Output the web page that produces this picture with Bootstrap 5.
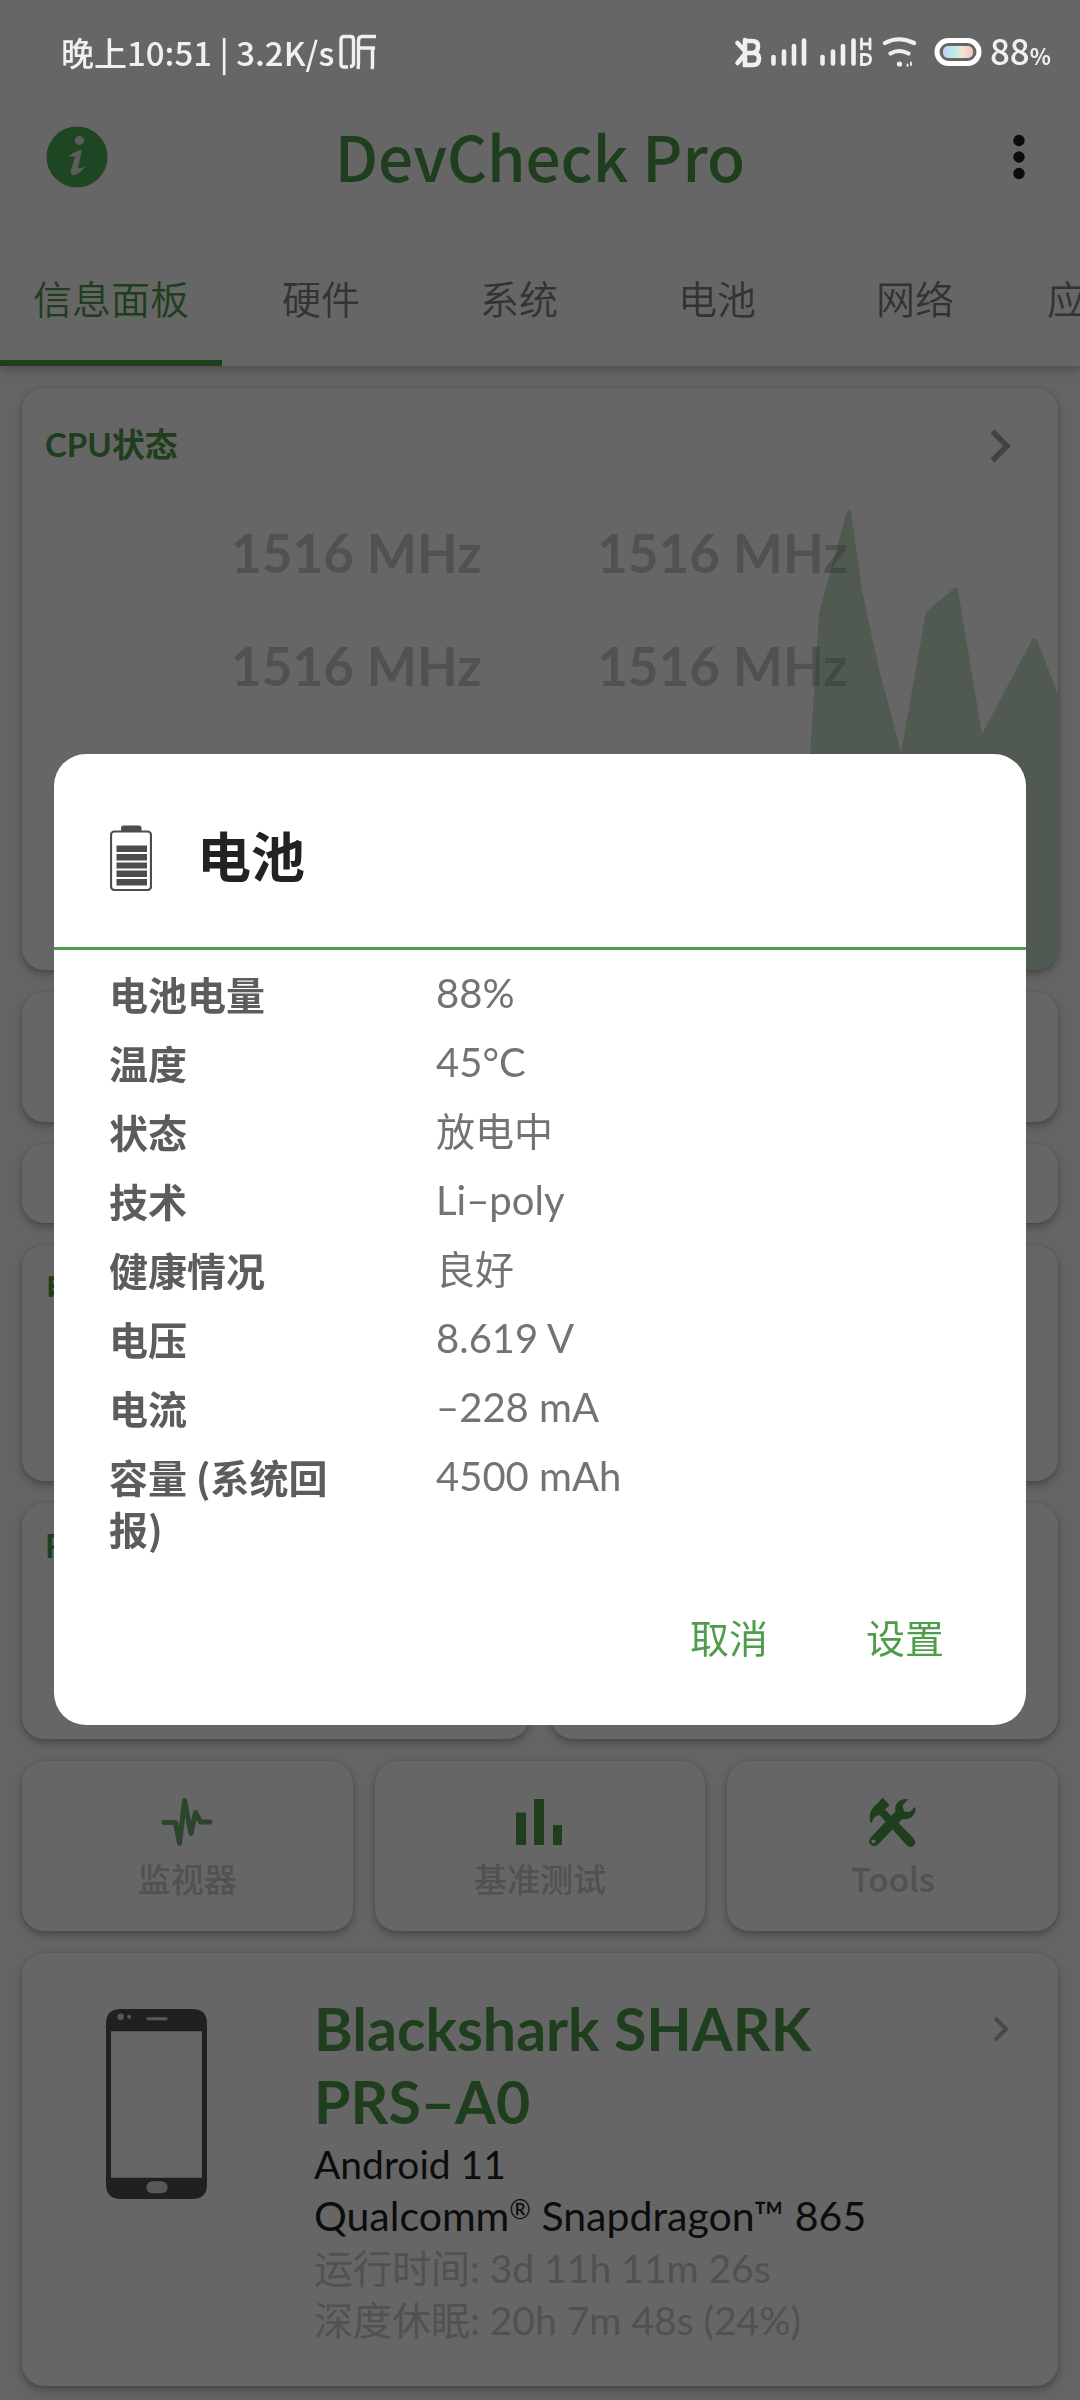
<!DOCTYPE html>
<html lang="zh-CN">
<head>
<meta charset="utf-8">
<meta name="viewport" content="width=device-width, initial-scale=1">
<title>DevCheck Pro</title>
<link rel="stylesheet" href="https://cdn.jsdelivr.net/npm/bootstrap@5.3.0/dist/css/bootstrap.min.css">
<style>
  :root { --leaf: #4f9c4b; --ink: #1f1f1f; --pale: #cacaca; }
  body { font-family: Lato, "Noto Sans CJK SC", sans-serif; background: #fff; color: var(--ink); overflow: hidden; font-size: 39px; line-height: 52px; }
  .cjk-face { font-family: "Noto Sans CJK SC", sans-serif; }
  a { color: inherit; text-decoration: none; }
  svg { display: block; flex: none; }
  .leaf { color: var(--leaf); }
  .pale { color: var(--pale); }

  .status-bar { position: relative; z-index: 1060; height: 104px; padding: 0 29px 0 61px; color: #f0f0f0; font-size: 33px; font-weight: 500; line-height: 48px; }
  .status-bar .level { font-size: 35px; }
  .status-bar small { font-size: 22px; font-weight: 700; }
  .app-bar { height: 106px; padding: 0 46px; position: relative; z-index: 2; background: #fff; }
  .app-bar h1 { font-size: 62px; font-weight: 500; line-height: 80px; padding-bottom: 4px; }
  .app-bar .btn { width: 62px; }
  .tab-strip { height: 156px; box-shadow: 0 3px 10px rgba(0,0,0,.25); position: relative; z-index: 1; background: #fff; }
  .tab-strip .nav-link { flex: none; min-width: 198px; padding: 24px 33px 0; color: #7f7f7f; border-bottom: 6px solid transparent; border-radius: 0; text-align: center; line-height: 56px; font-weight: 350; }
  .tab-strip .nav-link.active { color: var(--leaf); border-color: var(--leaf); background: none; }

  .board { background: #fafafa; padding: 22px; gap: 22px; }
  .tile { flex: 1 1 0; background: #fff; border-radius: 22px; box-shadow: 0 4px 8px rgba(0,0,0,.28), 0 0 3px rgba(0,0,0,.12); position: relative; overflow: hidden; }
  .tile-title { font-size: 33px; line-height: 44px; font-weight: 700; padding: 34px 23px 0; margin: 0; }
  .cpu-tile { min-height: 582px; }
  .cpu-tile .go { margin: 41px 46px 0 0; }
  .h-ram { min-height: 130px; } .h-slim { min-height: 79px; } .h-pair { min-height: 236px; }
  .h-pair .tile-title { padding-top: 20px; }
  .pair-row, .tool-row { gap: 22px; }
  .cpu-grid { padding: 30px 30px 0 209px; font-size: 53px; font-weight: 700; line-height: 113px; }
  .cpu-grid div { flex: 0 0 366px; }
  .load-graph { position: absolute; right: 0; bottom: 0; width: 250px; height: 461px; }
  .tool-tile { height: 170px; padding-top: 34px; font-size: 33px; font-weight: 500; }
  .tool-tile span { line-height: 48px; margin-top: 5px; }
  .device { min-height: 433px; padding: 39px 46px 37px 83px; }
  .device-info { margin-left: 106px; }
  .device-info h2 { font-size: 59px; line-height: 73px; font-weight: 700; margin: 0; }
  .device-info p { margin: 0; }
  .device-info .chip { font-size: 41px; }
  .device-info .chip small { font-size: 26px; line-height: 26px; vertical-align: 12px; }

  .shade { position: fixed; inset: 0; background: rgba(0,0,0,.6); z-index: 1050; }
  .sheet-wrap { padding-top: 79px; }
  .sheet-wrap .modal-dialog { max-width: none; margin: 0 54px; min-height: 100%; }
  .sheet-wrap .modal-content { border: 0; border-radius: 32px; }
  .sheet-head { padding: 60px 56px 46px; gap: 45px; border-bottom: 3px solid var(--leaf); }
  .sheet-head h2 { font-size: 54px; font-weight: 700; line-height: 87px; margin: 0; color: #222; }
  .facts { padding: 17px 55px 0; margin: 0; }
  .facts dt { width: 230px; font-weight: 700; color: #5c5c5c; }
  .facts dd { margin: 0 0 0 97px; color: #737373; }
  .facts dd.latin { font-size: 40px; }
  .facts > div { padding-bottom: 17px; }
  .sheet-foot { padding: 33px 52px 53px; gap: 38px; }
  .sheet-foot .btn { font-size: 39px; line-height: 56px; padding: 6px 30px; border: 0; color: var(--leaf); }
</style>
</head>
<body>

<div class="status-bar d-flex align-items-center cjk-face">
  <span>晚上10:51 | 3.2K/s</span>
  <svg class="ms-1" width="40" height="36" viewBox="0 0 40 36" fill="none" stroke="#f0f0f0" stroke-width="3.4"><path d="M10 33H5.500Q3 33 3 30V6Q3 2.500 6 2.500H12.500Q15.500 2.500 15.500 6V29Q15.500 32 12 33"/><path d="M38 2.500H24Q20.500 2.500 20.500 7V28Q20.500 32 20 35M22 14H37M34.500 14V30Q34.500 33 34 35"/></svg>
  <div class="d-flex align-items-center ms-auto">
    <svg class="me-3" width="184" height="36" viewBox="732 34 184 36" fill="none" stroke="#f0f0f0" stroke-linecap="round">
      <path d="M743 40V65H751Q757 65 757 58.500Q757 53 751 53Q756 52 756 46Q756 41 750 41H743M743 53H751M735.500 43L743 51M735.500 63L743 54" stroke-width="4.600"/>
      <path d="M771.500 57V63.500M782 51.500V63.500M792 46V63.500M802 40.500V63.500M820.500 57V63.500M831 51.500V63.500M841 46V63.500M851.500 40.500V63.500" stroke-width="4.600"/>
      <path d="M859.500 39V49M868 39V49M860 44H868M859.500 54.500V64.500H863Q868.500 64 868.500 59.500Q868.500 54.500 863 54.500Z" stroke-width="2.800"/>
      <path d="M883 43Q897 35.500 912 43M888.500 53.500Q897 48.500 906.500 53.500" stroke-width="4.200"/>
      <circle cx="897.500" cy="64" r="2.600" fill="#f0f0f0" stroke="none"/>
      <path d="M905.500 64.500V66M909 62.500V65" stroke-width="1.800"/>
    </svg>
    <svg width="48" height="28" viewBox="0 0 48 28"><defs><linearGradient id="cell"><stop offset="0" stop-color="#c0cdf5"/><stop offset=".35" stop-color="#b8ecec"/><stop offset=".65" stop-color="#eee8d0"/><stop offset="1" stop-color="#f8c0bf"/></linearGradient></defs><rect x="3" y="2.500" width="42" height="23" rx="11.500" fill="none" stroke="#fff" stroke-width="5"/><rect x="9" y="8" width="30" height="12" rx="5" fill="url(#cell)"/></svg>
    <span class="level ms-2">88<small>%</small></span>
  </div>
</div>

<header class="app-bar d-flex align-items-center justify-content-between">
  <button class="btn p-0 border-0" aria-label="关于">
    <svg width="62" height="62" viewBox="0 0 62 62"><circle cx="31" cy="31" r="30.500" fill="#4eaf58"/><circle cx="33.500" cy="14.500" r="4.600" fill="#e6e6e6"/><path d="M22.500 31Q27 25.500 36 24L32 42Q34 43 39 40.500Q36 46 29 49Q24 50 25 44L29 31Q26 29.500 22.500 31Z" fill="#e6e6e6"/></svg>
  </button>
  <h1 class="cjk-face leaf m-0">DevCheck Pro</h1>
  <button class="btn p-0 border-0 d-flex justify-content-end" aria-label="更多">
    <svg width="28" height="46" viewBox="0 0 28 46" fill="#1f1f1f"><circle cx="13" cy="6.500" r="5.700"/><circle cx="13" cy="23" r="5.700"/><circle cx="13" cy="39.500" r="5.700"/></svg>
  </button>
</header>

<nav class="tab-strip nav flex-nowrap overflow-hidden cjk-face">
  <a class="nav-link active d-flex align-items-center justify-content-center" href="#">信息面板</a>
  <a class="nav-link d-flex align-items-center justify-content-center" href="#">硬件</a>
  <a class="nav-link d-flex align-items-center justify-content-center" href="#">系统</a>
  <a class="nav-link d-flex align-items-center justify-content-center" href="#">电池</a>
  <a class="nav-link d-flex align-items-center justify-content-center" href="#">网络</a>
  <a class="nav-link d-flex align-items-center justify-content-center" href="#">应用程序</a>
</nav>

<main class="board d-flex flex-column">
  <section class="tile cpu-tile flex-grow-0">
    <div class="d-flex justify-content-between">
      <h2 class="tile-title leaf">CPU状态</h2>
      <svg class="go" width="22" height="34" viewBox="0 0 22 34" fill="none" stroke="#a5a5a5" stroke-width="5.500"><path d="M2.500 2.500L17 17L2.500 31.500"/></svg>
    </div>
    <div class="cpu-grid d-flex flex-wrap pale">
      <div>1516 MHz</div><div>1516 MHz</div><div>1516 MHz</div><div>1516 MHz</div>
    </div>
    <svg class="load-graph" viewBox="808 509 250 461"><path d="M808 970V790L819 613L847 511Q849 508 851 511L862 590L878 665L901 752L926 612L953 589Q957 586 958 590L982 734L1032 640Q1035 636 1037 640L1058 694V970Z" fill="#4f9c4b" fill-opacity=".3"/></svg>
  </section>
  <section class="tile h-ram flex-grow-0"></section>
  <section class="tile h-slim flex-grow-0"></section>
  <div class="pair-row d-flex">
    <section class="tile h-pair"><h2 class="tile-title leaf">电池</h2></section>
    <section class="tile h-pair"></section>
  </div>
  <div class="pair-row d-flex">
    <section class="tile h-pair"><h2 class="tile-title leaf">RAM</h2></section>
    <section class="tile h-pair"></section>
  </div>
  <div class="tool-row d-flex cjk-face">
    <a href="#" class="tile tool-tile d-flex flex-column align-items-center pale">
      <svg width="52" height="54" viewBox="161 1794 52 54" fill="none" stroke="#70ad69" stroke-width="5" stroke-linecap="round" stroke-linejoin="round"><path d="M164 1821.500H175.500L179.500 1842.500L184.500 1799.500L191 1832.500L195.500 1811.500L200.500 1821H210"/></svg>
      <span>监视器</span>
    </a>
    <a href="#" class="tile tool-tile d-flex flex-column align-items-center pale">
      <svg width="48" height="54" viewBox="516 1794 48 54" fill="#4f9c4b"><path d="M516 1811.500H526V1844H516ZM534 1798H544V1844H534ZM553 1824H562V1844H553Z"/></svg>
      <span>基准测试</span>
    </a>
    <a href="#" class="tile tool-tile d-flex flex-column align-items-center pale">
      <svg width="48" height="54" viewBox="869 1794 48 54" fill="#4f9c4b"><path d="M882.500 1796.500L889.500 1804L885 1808.500L912.500 1836Q917 1841 914 1844.500Q910.500 1847.500 906.500 1844L879.500 1814Q873 1815 872 1822Q869 1822 870 1813Q872 1806 878 1802Z"/><path d="M908 1798.500L902.500 1804.500L904 1810.500L910 1811L914.500 1806Q917 1807 914.500 1812.500Q911 1819 902.500 1818L878 1843.500Q874 1846.500 870.500 1843.500Q867.500 1840 871 1836L895.500 1810.500Q894 1802 901 1799Q905 1797.500 908 1798.500Z"/><circle cx="873.500" cy="1840.500" r="2" fill="#fff"/></svg>
      <span>Tools</span>
    </a>
  </div>
  <section class="tile device d-flex align-items-start flex-grow-0">
    <svg class="mt-3" width="103" height="192" viewBox="0 0 102 190"><path fill="#505050" fill-rule="evenodd" d="M14 1H88Q101 2 101 15V175Q101 188 88 189H14Q1 188 1 175V15Q1 2 14 1ZM6 23V168H96V23Z"/><circle cx="15.500" cy="8.500" r="3.200" fill="#ddd"/><circle cx="24" cy="8.500" r="2" fill="#ddd"/><rect x="41" y="9" width="21" height="3" rx="1.500" fill="#ddd"/><rect x="41" y="171.500" width="21" height="12" rx="6" fill="#ddd"/></svg>
    <div class="device-info flex-grow-1">
      <h2 class="leaf">Blackshark SHARK<br>PRS–A0</h2>
      <p>Android 11</p>
      <p class="chip">Qualcomm<small>®</small> Snapdragon™ 865</p>
      <p class="pale">运行时间: 3d 11h 11m 26s</p>
      <p class="pale">深度休眠: 20h 7m 48s (24%)</p>
    </div>
    <svg class="mt-4" width="20" height="26" viewBox="0 0 20 26" fill="none" stroke="#b4b4b4" stroke-width="4"><path d="M3 2L14 13L3 24"/></svg>
  </section>
</main>

<div class="shade"></div>
<div class="modal d-block sheet-wrap" tabindex="-1" role="dialog" aria-labelledby="sheetTitle">
  <div class="modal-dialog modal-dialog-centered">
    <div class="modal-content">
      <div class="sheet-head d-flex align-items-center">
        <svg width="42" height="66" viewBox="0 0 42 66" fill="#4d4d4d"><path d="M11 7V3Q11 .5 13.500 .5H29Q31.500 .5 31.500 3V7Z"/><rect x="1" y="6.500" width="40" height="58.500" rx="3.500" fill="none" stroke="#4d4d4d" stroke-width="2.200"/><path d="M6.500 20.500H37V27H6.500ZM6.500 29H37V35.500H6.500ZM6.500 37.500H37V43.500H6.500ZM6.500 45.500H37V52H6.500ZM6.500 54H37V60.500H6.500Z"/></svg>
        <h2 id="sheetTitle">电池</h2>
      </div>
      <dl class="facts">
        <div class="d-flex"><dt class="cjk-face">电池电量</dt><dd class="latin">88%</dd></div>
        <div class="d-flex"><dt class="cjk-face">温度</dt><dd class="latin">45°C</dd></div>
        <div class="d-flex"><dt class="cjk-face">状态</dt><dd>放电中</dd></div>
        <div class="d-flex"><dt class="cjk-face">技术</dt><dd class="latin">Li–poly</dd></div>
        <div class="d-flex"><dt class="cjk-face">健康情况</dt><dd>良好</dd></div>
        <div class="d-flex"><dt class="cjk-face">电压</dt><dd class="latin">8.619 V</dd></div>
        <div class="d-flex"><dt class="cjk-face">电流</dt><dd class="latin">–228 mA</dd></div>
        <div class="d-flex"><dt class="cjk-face">容量 (系统回报)</dt><dd class="latin">4500 mAh</dd></div>
      </dl>
      <div class="sheet-foot d-flex justify-content-end">
        <button type="button" class="btn">取消</button>
        <button type="button" class="btn">设置</button>
      </div>
    </div>
  </div>
</div>

<script src="https://cdn.jsdelivr.net/npm/bootstrap@5.3.0/dist/js/bootstrap.bundle.min.js"></script>
</body>
</html>
